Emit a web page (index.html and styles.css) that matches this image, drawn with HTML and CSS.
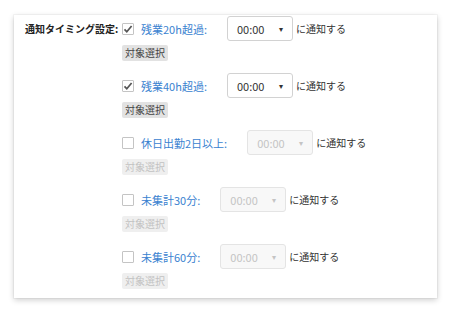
FILE: index.html
```html
<!DOCTYPE html>
<html lang="ja">
<head>
    <meta charset="UTF-8">
    <meta name="viewport" content="width=device-width, initial-scale=1.0">
    <title>通知タイミング設定</title>
    <link rel="stylesheet" href="styles.css">
</head>
<body>

    <div class="page">
        <div class="card">
            <div class="field-label">通知タイミング設定:</div>

            <div class="options">
                <!-- 残業20h -->
                <div class="opt">
                    <div class="opt-line">
                        <span class="check is-checked">
                            <svg viewBox="0 0 12 12" width="12" height="12"><path d="M2.5 6.3 L4.8 8.8 L9.6 3" fill="none" stroke="#555" stroke-width="1.7"/></svg>
                        </span>
                        <span class="opt-name">残業20h超過:</span>
                        <div class="time-select"><span>00:00</span><span class="caret">&#9662;</span></div>
                        <span class="suffix">に通知する</span>
                    </div>
                    <button class="target-btn">対象選択</button>
                </div>

                <!-- 残業40h -->
                <div class="opt">
                    <div class="opt-line">
                        <span class="check is-checked">
                            <svg viewBox="0 0 12 12" width="12" height="12"><path d="M2.5 6.3 L4.8 8.8 L9.6 3" fill="none" stroke="#555" stroke-width="1.7"/></svg>
                        </span>
                        <span class="opt-name">残業40h超過:</span>
                        <div class="time-select"><span>00:00</span><span class="caret">&#9662;</span></div>
                        <span class="suffix">に通知する</span>
                    </div>
                    <button class="target-btn">対象選択</button>
                </div>

                <!-- 休日出勤 -->
                <div class="opt">
                    <div class="opt-line">
                        <span class="check"></span>
                        <span class="opt-name">休日出勤2日以上:</span>
                        <div class="time-select is-disabled"><span>00:00</span><span class="caret">&#9662;</span></div>
                        <span class="suffix">に通知する</span>
                    </div>
                    <button class="target-btn" disabled>対象選択</button>
                </div>

                <!-- 未集計30分 -->
                <div class="opt">
                    <div class="opt-line">
                        <span class="check"></span>
                        <span class="opt-name">未集計30分:</span>
                        <div class="time-select is-disabled"><span>00:00</span><span class="caret">&#9662;</span></div>
                        <span class="suffix">に通知する</span>
                    </div>
                    <button class="target-btn" disabled>対象選択</button>
                </div>

                <!-- 未集計60分 -->
                <div class="opt">
                    <div class="opt-line">
                        <span class="check"></span>
                        <span class="opt-name">未集計60分:</span>
                        <div class="time-select is-disabled"><span>00:00</span><span class="caret">&#9662;</span></div>
                        <span class="suffix">に通知する</span>
                    </div>
                    <button class="target-btn" disabled>対象選択</button>
                </div>
            </div>
        </div>
    </div>

</body>
</html>
```

FILE: styles.css
```css
body {
    margin: 0;
    padding: 0;
    background: #fff;
    font-family: "Noto Sans CJK JP", "Noto Sans", sans-serif;
    color: #333;
}

.page {
    padding: 15px 15px 16px 14px;
}

.card {
    width: 423px;
    height: 283px;
    box-sizing: border-box;
    padding: 1px 0 0 11px;
    background: #fff;
    box-shadow: 0 0 0 1px rgba(0, 0, 0, 0.03), 0 2px 6px rgba(0, 0, 0, 0.2);
    display: flex;
    align-items: flex-start;
}

.field-label {
    width: 97px;
    font-size: 10px;
    font-weight: bold;
    color: #222;
    line-height: 25px;
}

.options {
    display: flex;
    flex-direction: column;
    gap: 12px;
}

.opt {
    display: flex;
    flex-direction: column;
    align-items: flex-start;
    gap: 4px;
}

.opt-line {
    display: flex;
    align-items: center;
    height: 25px;
}

.check {
    width: 12px;
    height: 12px;
    box-sizing: border-box;
    border: 1px solid #c4c4c4;
    border-radius: 1px;
    background: #fff;
    display: flex;
    align-items: center;
    justify-content: center;
}

.check svg {
    flex-shrink: 0;
}

.opt-name {
    margin-left: 7px;
    margin-right: 20px;
    font-size: 11px;
    color: #3a82d0;
}

.time-select {
    width: 66px;
    height: 25px;
    box-sizing: border-box;
    border: 1px solid #d2d2d2;
    border-radius: 3px;
    background: #fff;
    display: flex;
    align-items: center;
    justify-content: space-between;
    padding: 0 9px 0 9px;
    font-size: 11px;
    color: #333;
}

.time-select .caret {
    font-size: 8px;
    color: #333;
}

.time-select.is-disabled {
    background: #f8f8f8;
    border-color: #e4e4e4;
    color: #c4c4c4;
}

.time-select.is-disabled .caret {
    color: #c4c4c4;
}

.suffix {
    margin-left: 3px;
    font-size: 10px;
    color: #333;
}

.target-btn {
    height: 16px;
    padding: 0 3px;
    border: none;
    border-radius: 2px;
    background: #e2e2e2;
    font-family: inherit;
    font-size: 10px;
    line-height: 16px;
    color: #444;
}

.target-btn:disabled {
    background: #efefef;
    color: #c2c2c2;
}
```
